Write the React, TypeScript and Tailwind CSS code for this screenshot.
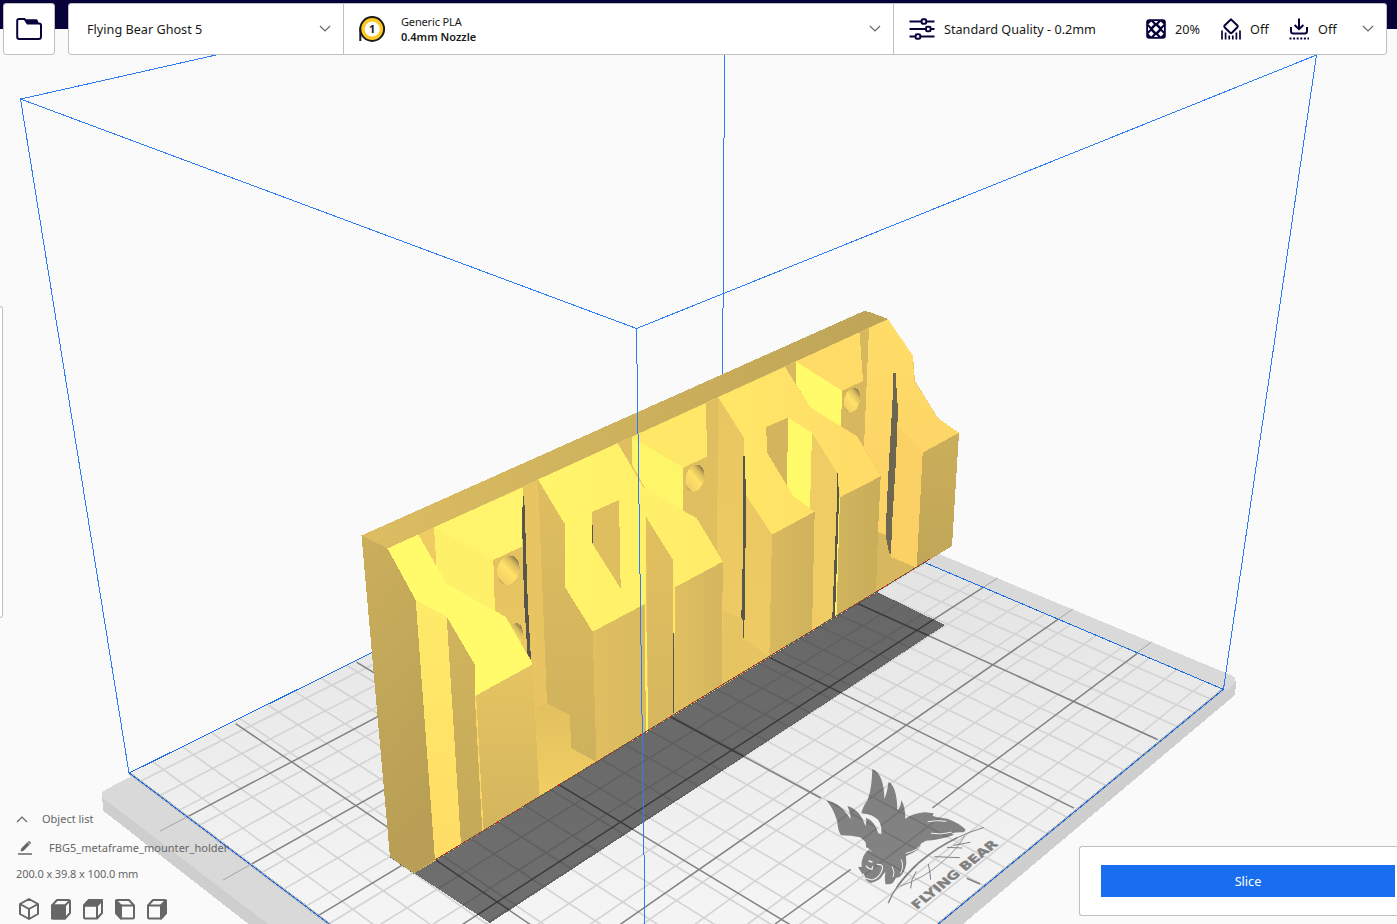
import React from 'react';

type Pt = [number, number];

/* ---------- Build plate projection ---------- */
const L: Pt = [129.3, 773];
const B: Pt = [724.8, 477.6];
const R: Pt = [1223.3, 689.3];
const F: Pt = [646.9, 1164];

function makeProjection(p0: Pt, p1: Pt, p2: Pt, p3: Pt) {
  const dx1 = p1[0] - p2[0], dx2 = p3[0] - p2[0], dx3 = p0[0] - p1[0] + p2[0] - p3[0];
  const dy1 = p1[1] - p2[1], dy2 = p3[1] - p2[1], dy3 = p0[1] - p1[1] + p2[1] - p3[1];
  const den = dx1 * dy2 - dx2 * dy1;
  const g = (dx3 * dy2 - dx2 * dy3) / den;
  const h = (dx1 * dy3 - dx3 * dy1) / den;
  return (s: number, t: number): Pt => {
    const w = 1 + g * s + h * t;
    return [
      (p0[0] + s * (p1[0] * (1 + g) - p0[0]) + t * (p3[0] * (1 + h) - p0[0])) / w,
      (p0[1] + s * (p1[1] * (1 + g) - p0[1]) + t * (p3[1] * (1 + h) - p0[1])) / w,
    ];
  };
}
const project = makeProjection(L, B, R, F);

function seg(s0: number, t0: number, s1: number, t1: number) {
  const a = project(s0, t0);
  const b = project(s1, t1);
  return `M${a[0].toFixed(1)} ${a[1].toFixed(1)}L${b[0].toFixed(1)} ${b[1].toFixed(1)}`;
}

const minor =
  Array.from({ length: 25 }, (_, i) => seg(0.03 + i * 0.0392, 0, 0.03 + i * 0.0392, 1)).join('') +
  Array.from({ length: 21 }, (_, i) => seg(0, 0.9697 - i * 0.0471, 1, 0.9697 - i * 0.0471)).join('');

const major = [
  seg(0.138, 0.007, 0.138, 0.99),
  seg(0.317, 0.004, 0.317, 0.99),
  'M400 570L670.7 717L731.7 750L820.7 798M966.7 878.3L980 884',
  seg(0.676, 0.01, 0.676, 0.995),
  seg(0.853, 0.01, 0.853, 0.995),
  seg(0, 0.142, 1, 0.142),
  seg(0, 0.2865, 1, 0.2865),
  seg(0, 0.43, 1, 0.426),
  seg(0, 0.573, 1, 0.568),
  seg(0, 0.715, 1, 0.7116),
  'M1137.3 653.3L932.3 808M850.7 869.3L775 924',
].join('');

const overhang = [
  seg(-0.034, 0.142, 0, 0.142),
  seg(-0.034, 0.2865, 0, 0.2865),
  seg(1, 0.568, 1.034, 0.568),
  seg(1, 0.7116, 1.034, 0.7116),
  seg(1, 0.854, 1.034, 0.854),
].join('');

/* ---------- Model faces, back to front ---------- */
const faces: [string, string][] = [
  ['361.5,535.5 864,311 888,319 913,356 915,381 938,418 959,433 952,546 415,873 390,857', '#e9c762'],
  ['361.5,535.5 387.5,548.5 415.7,600 435,860 414,873.5 390,857.5', 'url(#endL)'],
  ['361.5,535.5 864,311 870,312 888,319 387.5,548.5', 'url(#top)'],
  ['418.3,535 434,527.3 437,568', '#efcb63'],
  ['434,527.3 493.3,560 495,612 475,600 446.7,584 436.5,567', '#fff06a'],
  ['434,527.3 523,487.3 521.7,546.7 493.3,560', '#fff46b'],
  ['493.3,560 521.7,546.7 531,664 505.7,617 495,612', 'url(#tanA)'],
  ['523,487.3 538,479.5 547,703.3 535.7,708 531,660 524,600', '#e8c562'],
  ['535.7,708 547,703.3 570,715 571,748 596.5,762 539.3,796.7', 'url(#floorA)'],
  ['538,479.5 565,524.3 565,587 592.7,631.7 596.5,762 571,748 570,715 547,703.3', 'url(#sideB)'],
  ['592.7,631.7 645,604 646,732 596.5,762', 'url(#frontB)'],
  ['617.7,443.3 631.5,437 632,466', '#dfbe60'],
  ['631.5,437 683.3,467.7 683.3,511 645,488.3 632,464', '#fff568'],
  ['631.5,437 706,403.3 707,456.7 683.3,467.7', '#ffe768'],
  ['683.3,467.7 707,456.7 706,403.3 718.3,397.3 717,551 696.7,518.3 683.3,511', '#dfbf60'],
  ['718.3,397.3 744,438 745,494 772,534.7 769.3,657.3 722,685 722.7,561.7 717,551', 'url(#tanC)'],
  ['722.7,610.7 741.7,618 743.5,638 769.3,657.3 722,685', '#e6c461'],
  ['766,427 788,417.7 787,486 767.5,453.3', '#d4b55d'],
  ['788,417.7 812,432.7 810,509 793.3,496 787,486', '#fffa6a'],
  ['812,432.7 837.5,473 834.5,617 812,630 814.7,511.7 810,508', '#efcc64'],
  ['772,534.7 814.7,511.7 812,630.5 769.3,657.3', 'url(#frontC)'],
  ['839.5,497.3 880.7,476.3 876,592 836,616.7', 'url(#frontD)'],
  ['785,367 796,362 796,386', '#d9b95f'],
  ['796,361.5 842,390.7 841,427 810,407.3 796,384', '#fffb69'],
  ['796,361.5 859.5,332.5 863,381 842,390.7', '#ffdc67'],
  ['842,390.7 863,381 859.5,332.5 869,328 864,447 857,436.3 841,427', '#d8b85e'],
  ['869,328 888,319 913,356 914,381 938,418.7 959,432.7 922.7,452.7 916.7,567.7 891,557 886,535 878,532 880.7,476.3 864,447', 'url(#endR)'],
  ['878,532 886,535 891,557 916.7,567.7 876,592', '#d8b85e'],
  ['922.7,452.7 959,432.7 952,546 916.7,567.7', 'url(#frontE)'],
  ['645,489 646,604 648.3,731 646,733 644.5,604', '#fff069'],
  ['646,516.7 673,560 674,713.5 648.3,731', 'url(#sideC)'],
  ['675,587.3 722.7,561.7 722,685 674,714.5', 'url(#frontB2)'],
  ['673,560 675,560 675,634 673,634', '#ffe868'],
  ['838,497 840,497 836.5,616 835,617', '#fff069'],
];

const darkSlots: string[] = [
  '523,496 524.2,496 525,518 527.7,600 531,660 527.5,654 524,600 522,518',
  '591.7,525 593,525 593,543 591.7,543',
  '743,456 745,456 746,500 745,600 744.5,620 743.8,638 743,638 742.5,620 741,617 742.3,600 743,500',
  '672.9,633 674.1,633 674.1,713 672.9,713',
  '837,473 838,473 839,500 837,560 835,617 832.3,618 834.5,560 837,500',
];

const faceBright: [string, string][] = [
  ['387.5,548.5 418.3,534.5 446.7,584 475,600 496.7,612 505.7,616.7 532.7,664.3 475,696 475,665 446.7,616.7 415.7,600', '#fffb6b'],
  ['415.7,600 446.7,616.7 461,845 435,860.5', 'url(#stripA)'],
  ['446.7,616.7 475,665 475,696 482.3,832 461,845', 'url(#sideA)'],
  ['475,696 532.7,664.3 539.3,796.7 482.3,832', 'url(#frontA)'],
];

function Scene() {
  return (
    <svg className="absolute inset-0" width="1397" height="924" viewBox="0 0 1397 924" shapeRendering="crispEdges">
      <defs>
        <linearGradient id="bed" x1="0" y1="0" x2="0" y2="1">
          <stop offset="0" stopColor="#dfdfdf" />
          <stop offset=".62" stopColor="#f4f4f4" />
          <stop offset="1" stopColor="#f6f6f6" />
        </linearGradient>
        <linearGradient id="endL" x1="0" y1="0" x2=".25" y2="1"><stop offset="0" stopColor="#cbaf5d" /><stop offset="1" stopColor="#b89f55" /></linearGradient>
        <linearGradient id="top"><stop offset="0" stopColor="#dcbd62" /><stop offset=".5" stopColor="#ceb15d" /><stop offset="1" stopColor="#bda457" /></linearGradient>
        <linearGradient id="tanA" x1="0" y1="0" x2="0" y2="1"><stop offset="0" stopColor="#e3c160" /><stop offset="1" stopColor="#ecc962" /></linearGradient>
        <linearGradient id="floorA" x1="0" y1="0" x2="0" y2="1"><stop offset="0" stopColor="#e2c05f" /><stop offset="1" stopColor="#f2cf63" /></linearGradient>
        <linearGradient id="sideB" x1="0" y1="0" x2="0" y2="1"><stop offset="0" stopColor="#dfbe60" /><stop offset="1" stopColor="#ceb15c" /></linearGradient>
        <linearGradient id="frontB"><stop offset="0" stopColor="#e0bf61" /><stop offset="1" stopColor="#d9b95f" /></linearGradient>
        <linearGradient id="frontB2"><stop offset="0" stopColor="#dfbf61" /><stop offset="1" stopColor="#d4b65e" /></linearGradient>
        <linearGradient id="sideC" x1="0" y1="0" x2="0" y2="1"><stop offset="0" stopColor="#e2c060" /><stop offset="1" stopColor="#d6b75e" /></linearGradient>
        <linearGradient id="tanC" x1="0" y1="0" x2="0" y2="1"><stop offset="0" stopColor="#e9c661" /><stop offset="1" stopColor="#eecb63" /></linearGradient>
        <linearGradient id="frontC"><stop offset="0" stopColor="#d8b95f" /><stop offset="1" stopColor="#cfb25c" /></linearGradient>
        <linearGradient id="frontD"><stop offset="0" stopColor="#d1b45d" /><stop offset="1" stopColor="#c9ad5a" /></linearGradient>
        <linearGradient id="frontE" x1="0" y1="0" x2="0" y2="1"><stop offset="0" stopColor="#cbae5b" /><stop offset="1" stopColor="#c0a658" /></linearGradient>
        <linearGradient id="endR" x1="0" y1="0" x2="0" y2="1"><stop offset="0" stopColor="#ffdc68" /><stop offset="1" stopColor="#fad065" /></linearGradient>
        <linearGradient id="stripA" x1="0" y1="0" x2="0" y2="1"><stop offset="0" stopColor="#ffea69" /><stop offset="1" stopColor="#ffdc66" /></linearGradient>
        <linearGradient id="sideA" x1="0" y1="0" x2="0" y2="1"><stop offset="0" stopColor="#d2b45d" /><stop offset="1" stopColor="#c3a959" /></linearGradient>
        <linearGradient id="frontA" x1="0" y1="0" x2="0" y2="1"><stop offset="0" stopColor="#e6c462" /><stop offset="1" stopColor="#d3b55e" /></linearGradient>
        <linearGradient id="faceB"><stop offset="0" stopColor="#fff56a" /><stop offset="1" stopColor="#ffec69" /></linearGradient>
        <linearGradient id="faceC"><stop offset="0" stopColor="#ffe768" /><stop offset="1" stopColor="#ffdb67" /></linearGradient>
        <linearGradient id="hole" x1=".75" y1="0" x2=".3" y2="1">
          <stop offset="0" stopColor="#5f583b" />
          <stop offset=".1" stopColor="#a08b4f" />
          <stop offset=".24" stopColor="#dcbd60" />
          <stop offset=".5" stopColor="#ffe269" />
          <stop offset=".88" stopColor="#f4d166" />
          <stop offset="1" stopColor="#a08d50" />
        </linearGradient>
      </defs>

      {/* Rear of the build volume */}
      <path d="M21 99L216 55M724.5 55L722 480" fill="none" stroke="#2d7cf5" />

      {/* Platform */}
      <path d="M103.5 811L101.5 793L129 778L724 500L1235 678L1236 683L1235 695L963 924H248.5Z" fill="#cecece" />
      <path d="M101.5 797V793L106.7 789L132 776L724 500L900 537L939 554L1231 675L1235.5 678L1234 684L942 924H268Z" fill="#d9d9d9" />
      <path d="M1224 690L938 924H944L1234 686Z" fill="#d0d0d0" />
      <path d={overhang} stroke="#a5a5a5" fill="none" shapeRendering="auto" />
      <path d={`M${L}L${B}L${R}L${F}Z`} fill="url(#bed)" />
      <path d={minor} stroke="#d3d3d3" strokeWidth="1.6" fill="none" shapeRendering="auto" />
      <path d={major} stroke="#828282" strokeWidth="1.5" fill="none" shapeRendering="auto" />
      <path d={`M${L}L${F}L${R}`} stroke="#bdbdbd" strokeWidth="3" fill="none" />
      <path d={`M${L}L${B}L${R}L${F}Z`} stroke="#1f6be0" fill="none" />

      {/* Drop shadow */}
      <path d="M414 873L490 923L945 625L877 592Z" fill="#000" fillOpacity=".55" />

      {/* Plate logo */}
      <g transform="translate(810 750) scale(.33333)" shapeRendering="auto">
        <path
          fill="#000"
          fillOpacity=".46"
          d="M187 57Q222 72 223 146Q231 130 236 95Q261 110 262 181Q272 172 274 151Q286 170 286 206Q310 189 345 187L371 190L368 197L378 201L412 206Q450 220 467 239L462 247Q440 246 425 250L432 254Q400 268 348 272L335 280Q330 303 288 318L289 340Q286 365 270 380L258 384L249 398Q240 405 226 402Q223 385 226 366L220 373Q208 395 182 399Q165 392 157 372L144 352L155 350Q151 320 178 296L168 292Q172 275 150 262Q125 256 93 256Q83 240 82 215Q70 175 49 151Q90 158 117 200L122 208Q122 190 112 168Q150 178 166 228Q171 217 168 203Q194 212 205 250L214 252Q217 228 204 210Q185 192 154 190Q160 165 172 152Q186 115 187 57Z"
        />
        <g fill="none" stroke="#f0f0f0" strokeWidth="3.5" strokeLinecap="round">
          <path d="M156 191Q187 192 204 210Q216 228 212 250Q206 222 188 208Q175 200 160 197Z" fill="#f0f0f0" stroke="none" />
          <path d="M354 215Q385 209 408 214M364 250Q395 255 424 247M288 310Q325 302 336 280M274 329Q283 350 272 369M247 350Q256 368 250 380" strokeWidth="3" />
          <path d="M202 343Q221 342 217 358Q210 383 186 390L164 384L160 372" />
          <path d="M177 333L186 336M169 348Q174 357 186 358L188 350" strokeWidth="4" />
          <path d="M166 303Q176 296 184 303" strokeWidth="2" />
        </g>
        <g fill="none" stroke="#828282" strokeLinecap="round">
          <path d="M235 458Q256 405 320 345" strokeWidth="4" />
          <path d="M262 410Q290 370 330 335Q385 290 440 264" strokeWidth="5.5" />
          <path d="M440 264Q475 246 520 233" strokeWidth="3" />
          <path d="M272 408Q340 385 392 340Q440 300 464 258" strokeWidth="2.5" />
          <path d="M302 414Q302 388 318 365M362 388Q360 360 355 343M374 320L448 323M412 292L456 294M432 286L480 277" strokeWidth="3" />
        </g>
        <text
          transform="matrix(.78 -.62 .78 .66 321 479)"
          textLength="314"
          lengthAdjust="spacingAndGlyphs"
          fontSize="37"
          fontWeight="700"
          fill="#808080"
          stroke="#808080"
          strokeWidth="1.2"
          className="font-['DejaVu_Sans',sans-serif]"
        >
          FLYING BEAR
        </text>
      </g>

      {/* Sliced part */}
      {faces.map(([p, f], i) => <polygon key={i} points={p} fill={f} />)}
      <ellipse cx="508.3" cy="570.3" rx="11" ry="15" transform="rotate(14 508.3 570.3)" fill="url(#hole)" />
      <ellipse cx="514" cy="637" rx="8.5" ry="14" transform="rotate(14 514 637)" fill="url(#hole)" />
      <ellipse cx="695" cy="478.3" rx="9.2" ry="13.8" transform="rotate(14 695 478.3)" fill="url(#hole)" />
      <ellipse cx="852" cy="400.3" rx="7.8" ry="12.6" transform="rotate(14 852 400.3)" fill="url(#hole)" />
      {faceBright.map(([p, f], i) => <polygon key={i} points={p} fill={f} />)}
      <path d="M475.5 696L483 831" stroke="#fbd566" strokeWidth="1.4" />
      <path
        fillRule="evenodd"
        fill="url(#faceB)"
        d="M538 479.5L617.7 443.3L642 485L645 488.3L683.3 510.7L696.7 518.3L722.7 561.7L675 587.3L673 560L646 516.7L645 604L592.7 631.7L565 587V524.3ZM592 512L619 500L620.7 588.7L592 543Z"
      />
      <polygon points="592,512 619,500 620.7,588.7 592,543" fill="#dfbe60" />
      <path d="M718.3 397.3L785 367L810 407.3L857 436.3L880.7 476.3L840 497.3L837.5 473.3L812 432.7L788 417.7L766 427L767.5 453.3L793.3 496L814.7 511.7L772 534.7L745 494L744 438Z" fill="url(#faceC)" />
      {darkSlots.map((p, i) => <polygon key={i} points={p} fill="#58554a" />)}
      <polygon points="897.5,425 922.7,452.7 916.7,567.7 891,557" fill="#fbd165" />
      <polygon points="893.5,373 895.5,373 898,410 896,460 892,525 891,555 889,553 885.5,535 888,480 892.5,400" fill="#6d6650" />
      <path d="M435 860L596.5 762L722 685L876 592L930 559" stroke="#5f5a46" fill="none" />
      <path d="M435 860L596.5 762L722 685L876 592L930 559" stroke="#f01414" strokeDasharray="2 5 1 4" fill="none" />
      <path d="M390 857.5L414 873.5" stroke="#45576a" strokeDasharray="1 3" fill="none" />

      {/* Front of the build volume */}
      <path d="M129 773L20.5 99L636.5 328.5L1316.5 55L1223.5 689M636.5 328L645 924" fill="none" stroke="#2d7cf5" />
    </svg>
  );
}

/* ---------- Icons ---------- */
const Chevron = ({ className = '' }: { className?: string }) => (
  <svg className={className} width="12" height="8" viewBox="0 0 12 8" fill="none" stroke="#666" strokeWidth="1.2"><path d="M1 1L6 6L11 1" /></svg>
);

const Folder = () => (
  <svg width="26" height="22" viewBox="0 0 26 22" fill="none" stroke="#08023b" strokeWidth="2">
    <path d="M1.2 3Q1.2 1 3 1H8.5L11.5 5.5H23Q25 5.5 25 7.5V18.5Q25 21 22.8 21H3.4Q1.2 21 1.2 18.8Z" />
    <path d="M9 1.2H20.5Q22 1.6 22.5 5.5H11.5Z" fill="#08023b" stroke="none" />
  </svg>
);

const Spool = () => (
  <svg width="28" height="28" viewBox="0 0 28 28">
    <path d="M2.3 13V26" stroke="#1a1a1a" strokeWidth="2" />
    <circle cx="14.2" cy="14" r="11.9" fill="#ffc924" stroke="#1a1a1a" strokeWidth="2" />
    <circle cx="14.2" cy="14" r="7.6" fill="#fff" />
    <text x="14.2" y="18" textAnchor="middle" fontSize="11" fontWeight="700" fill="#191919" className="font-['Noto_Sans',sans-serif]">1</text>
  </svg>
);

const Sliders = () => (
  <svg width="26" height="22" viewBox="0 0 26 22" fill="none" stroke="#08023b" strokeWidth="2">
    <path d="M.5 3.5H12M18 3.5H25.5M.5 11H16M22 11H25.5M.5 18.5H6M12 18.5H25.5" />
    <rect x="12.6" y="1.2" width="4.6" height="4.6" rx="1.4" />
    <rect x="17" y="8.7" width="4.6" height="4.6" rx="1.4" />
    <rect x="6.6" y="16.2" width="4.6" height="4.6" rx="1.4" />
  </svg>
);

const Infill = () => (
  <svg width="20" height="20" viewBox="0 0 20 20">
    <rect x=".2" y=".2" width="19.6" height="19.6" rx="3" fill="#08023b" />
    <g fill="#fff">
      <path d="M10 6.8L13.2 10L10 13.2L6.8 10ZM5.2 2.4L7.9 5.2L5.2 7.9L2.4 5.2ZM14.8 2.4L17.6 5.2L14.8 7.9L12.1 5.2ZM5.2 12.1L7.9 14.8L5.2 17.6L2.4 14.8ZM14.8 12.1L17.6 14.8L14.8 17.6L12.1 14.8Z" />
      <path d="M7.8 2H12.2L10 4.2ZM7.8 18H12.2L10 15.8ZM2 7.8V12.2L4.2 10ZM18 7.8V12.2L15.8 10Z" />
    </g>
  </svg>
);

const Support = () => (
  <svg width="20" height="22" viewBox="0 0 20 22" fill="none" stroke="#08023b" strokeWidth="2">
    <path d="M10 1.4L16.4 7.5Q17.2 8.3 16.4 9.2L10.9 14.7Q10 15.5 9.1 14.7L3.6 9.2Q2.8 8.3 3.6 7.5Z" />
    <path d="M1 12.5V21.5M4.6 14.5V21.5M8.2 17.5V21.5M11.8 17.5V21.5M15.4 14.5V21.5M19 12.5V21.5" strokeWidth="1.7" />
  </svg>
);

const Adhesion = () => (
  <svg width="20" height="22" viewBox="0 0 20 22" fill="none" stroke="#08023b" strokeWidth="2">
    <path d="M10 .5V10.5M5.6 7L10 11.2L14.4 7M2 9V13Q2 15.5 4.3 15.5H15.7Q18 15.5 18 13V9" />
    <path d="M.5 20.5H20" strokeDasharray="2 1.6" />
  </svg>
);

const Pencil = () => (
  <svg width="14" height="14" viewBox="0 0 14 14" fill="#666">
    <path d="M2.6 10.4L3.2 7.4L9.3 1.3L11.7 3.6L5.6 9.7ZM9.8 .9L10.9 -.2L13.2 2L12.1 3.1ZM0 12.2H14V13.8H0Z" />
  </svg>
);

const cube = 'fill-none stroke-[#666] stroke-2';
const CubeIso = () => (
  <svg width="20" height="22" viewBox="0 0 20 22" className={cube} strokeLinejoin="round"><path d="M10 1L19 6V16L10 21L1 16V6ZM1 6L10 11L19 6M10 11V21" /></svg>
);
const CubeRight = ({ face }: { face: 'front' | 'top' | 'right' }) => (
  <svg width="20" height="22" viewBox="0 0 20 22" className={cube} strokeLinejoin="round">
    <path d="M1 7.5L6 2H17.5Q19 2 19 3.5V15L14 20.5H2.5Q1 20.5 1 19ZM1 7.5H14V20.5M14 7.5L19 2.5" />
    {face === 'front' && <path d="M1 7.5H14V20.5H1Z" fill="#666" />}
    {face === 'top' && <path d="M1 7.5L6 2H19L14 7.5Z" fill="#666" />}
    {face === 'right' && <path d="M14 7.5L19 2.5V15L14 20.5Z" fill="#666" />}
  </svg>
);
const CubeLeft = () => (
  <svg width="20" height="22" viewBox="0 0 20 22" className={cube} strokeLinejoin="round">
    <path d="M19 7.5L14 2H2.5Q1 2 1 3.5V15L6 20.5H17.5Q19 20.5 19 19ZM19 7.5H6V20.5" />
    <path d="M6 7.5L1 2.5V15L6 20.5Z" fill="#666" />
  </svg>
);

/* ---------- Panels ---------- */
function Header() {
  return (
    <header className="relative h-[55px] text-[12.67px] leading-[18px] text-[#191919]">
      <div className="h-[29px] bg-[#08023b]" />
      <div className="absolute inset-x-0 top-[3px] flex h-[52px] gap-[13px] pl-[3px] pr-[10px]">
        <button className="flex w-[52px] shrink-0 items-center justify-center rounded-[3px] border border-[#c0c0c0] bg-white"><Folder /></button>
        <div className="flex min-w-0 flex-1 rounded-[3px] border border-[#c0c0c0] bg-white">
          <div className="flex w-[275px] items-center justify-between border-r border-[#c0c0c0] pl-[18px] pr-[12.5px]">
            <span>Flying Bear Ghost 5</span>
            <Chevron />
          </div>
          <div className="flex w-[550px] items-center border-r border-[#c0c0c0] pl-[14px] pr-[12.5px]">
            <Spool />
            <div className="ml-[15px] flex-1 text-[11px] leading-[15px]">
              <div className="tracking-[-.15px]">Generic PLA</div>
              <div className="font-semibold">0.4mm Nozzle</div>
            </div>
            <Chevron />
          </div>
          <div className="flex flex-1 items-center pl-[15px] pr-[12.5px]">
            <Sliders />
            <span className="ml-[9px] w-[202px]">Standard Quality - 0.2mm</span>
            <Infill />
            <span className="ml-[9px] w-[46px]">20%</span>
            <Support />
            <span className="ml-[9px] w-[39px]">Off</span>
            <Adhesion />
            <span className="ml-[9px] flex-1">Off</span>
            <Chevron />
          </div>
        </div>
      </div>
    </header>
  );
}

function ObjectPanel() {
  return (
    <div className="flex w-[300px] flex-col pl-4 text-[11px] leading-4 text-[#666]">
      <div className="flex items-center">
        <Chevron className="rotate-180" />
        <span className="ml-[14px]">Object list</span>
      </div>
      <div className="mt-[13px] flex items-center pl-[2px]">
        <Pencil />
        <span className="ml-[17px] tracking-[.04px]">FBG5_metaframe_mounter_holder</span>
      </div>
      <div className="mt-[10px] tracking-[-.1px]">200.0 x 39.8 x 100.0 mm</div>
      <div className="mt-[16px] flex gap-3 pl-[3px]">
        <CubeIso />
        <CubeRight face="front" />
        <CubeRight face="top" />
        <CubeLeft />
        <CubeRight face="right" />
      </div>
    </div>
  );
}

export default function App() {
  return (
    <div className="relative h-[924px] w-[1397px] overflow-hidden bg-[#fafafa] font-['Noto_Sans',sans-serif]">
      <Scene />
      <div className="relative flex h-full flex-col">
        <Header />
        <div className="mt-[251px] h-[312px] w-[3px] rounded-r-[3px] border border-l-0 border-[#c0c0c0] bg-white" />
        <div className="flex flex-1 items-end justify-between">
          <div className="pb-[4px]"><ObjectPanel /></div>
          <div className="mb-[8px] h-[70px] w-[318px] rounded-l-[3px] border border-r-0 border-[#c0c0c0] bg-white py-[18px] pl-[21px] pr-[2px]">
            <button className="h-[32px] w-full bg-[#196ef0] text-[12.67px] leading-[32px] text-white">Slice</button>
          </div>
        </div>
      </div>
    </div>
  );
}
